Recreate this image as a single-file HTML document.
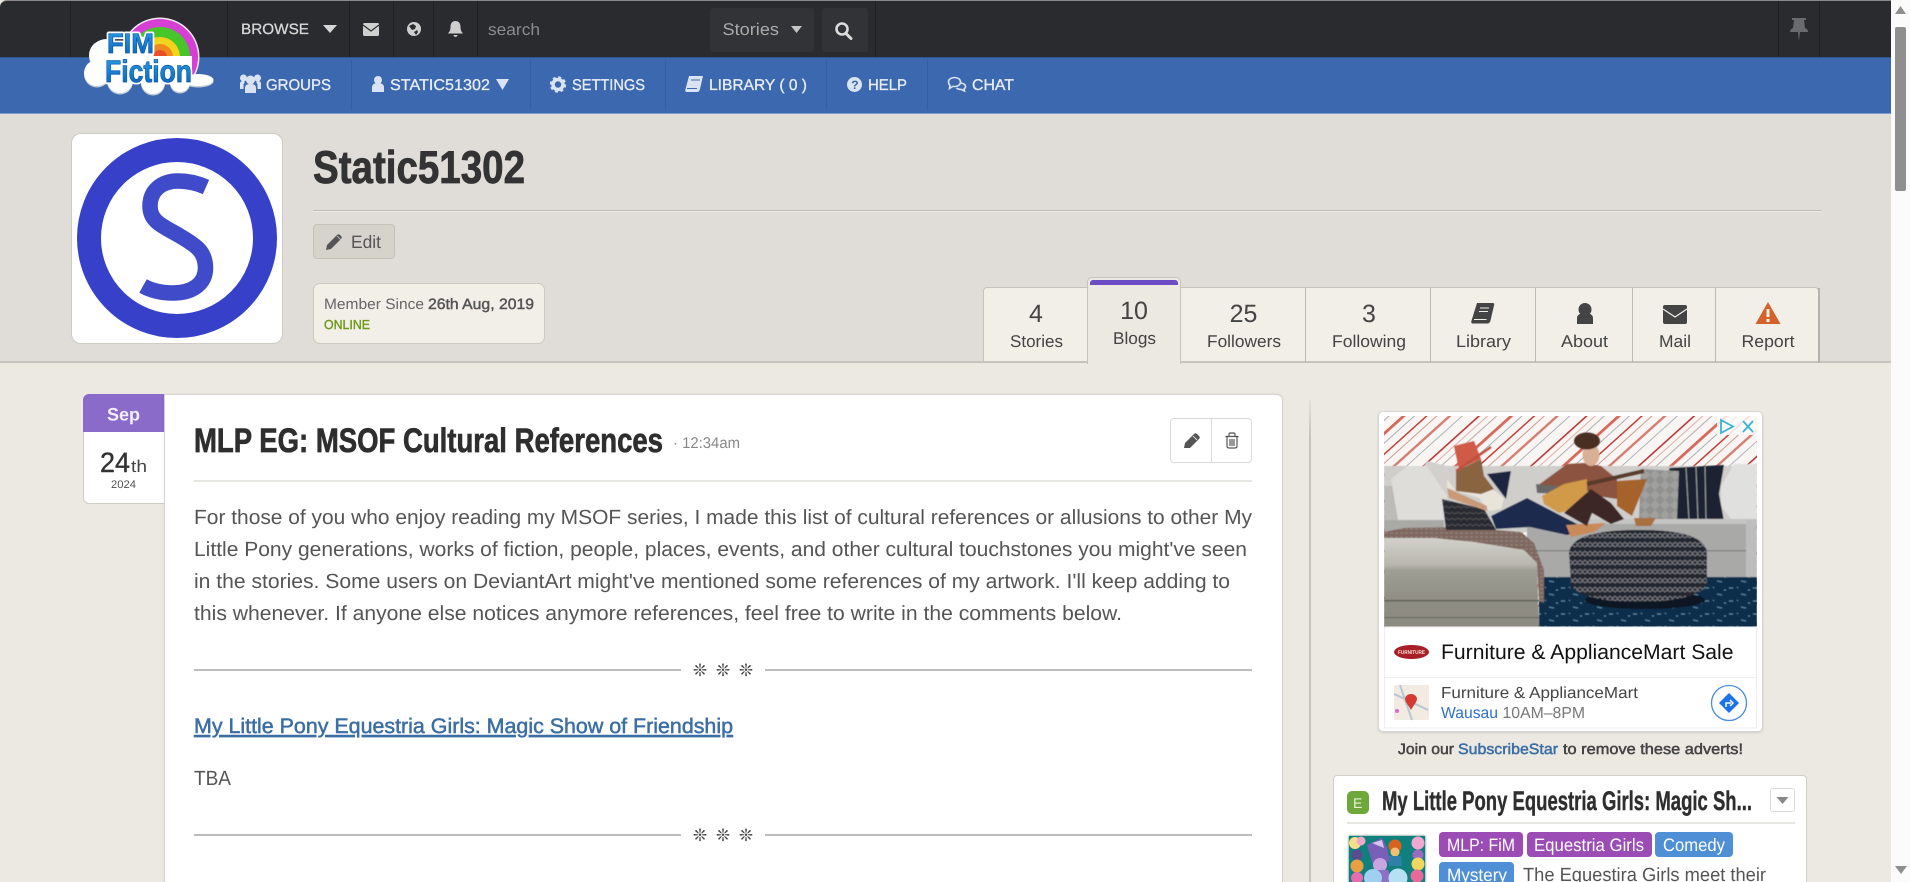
<!DOCTYPE html>
<html lang="en"><head><meta charset="utf-8"><title>Static51302 - Fimfiction</title>
<style>
html,body{margin:0;padding:0;width:1910px;height:882px;overflow:hidden;background:#ece8e2;font-family:"Liberation Sans",sans-serif}
#w{position:absolute;left:0;top:0;width:1910px;height:882px;overflow:hidden}
.b{position:absolute;box-sizing:border-box}
svg{position:absolute;left:0;top:0}
svg text{font-family:"Liberation Sans",sans-serif;text-rendering:geometricPrecision}
.nav{font-size:15.5px;fill:#e8edf6;stroke:#e8edf6;stroke-width:.3}
.tb{fill:#555;font-size:20.5px}
.tab{fill:#444;font-size:17px;text-anchor:middle}
.num{fill:#444;font-size:25px;text-anchor:middle}
.tag{fill:#fff;font-size:18px}
</style></head><body><div id="w">
<!-- top bars -->
<div class="b" style="left:0;top:0;width:1891px;height:58px;background:#2a2b2f;border-top:1px solid #8a8a8a;border-top-left-radius:7px"></div>
<div class="b" style="left:0;top:57px;width:1891px;height:57px;background:#3b68ae;border-top:1px solid #2f5590;border-bottom:1px solid #7f9cc8"></div>
<!-- header -->
<div class="b" style="left:0;top:114px;width:1891px;height:249px;background:#e0ddd8;border-bottom:2px solid #c6c3be"></div>
<div class="b" style="left:0;top:363px;width:1891px;height:519px;background:#ece8e2"></div>
<!-- scrollbar -->
<div class="b" style="left:1891px;top:0;width:19px;height:882px;background:#fbfbfb"></div>
<div class="b" style="left:1895px;top:27px;width:11px;height:164px;background:#8f8f8f;border-radius:2px"></div>
<!-- avatar -->
<div class="b" style="left:71px;top:133px;width:212px;height:211px;background:#fff;border:1px solid #cfccc6;border-radius:10px"></div>
<!-- edit & member -->
<div class="b" style="left:313px;top:224px;width:82px;height:35px;background:#d6d3cd;border:1px solid #c5c2bc;border-radius:4px"></div>
<div class="b" style="left:313px;top:283px;width:232px;height:61px;background:#f2eee8;border:1px solid #cdcac4;border-radius:7px"></div>
<!-- tabs -->
<div class="b" style="left:983px;top:287px;width:836px;height:76px;background:#f2eee8;border:1px solid #c6c3be;border-bottom:2px solid #c6c3be;border-radius:4px 4px 0 0"></div>
<div class="b" style="left:1087px;top:277px;width:94px;height:87px;background:#ece8e2;border:1px solid #c6c3be;border-bottom:0;border-radius:5px 5px 0 0"></div>
<div class="b" style="left:1090px;top:280px;width:88px;height:5px;background:#6b4cc4;border-radius:3px 3px 0 0"></div>
<div class="b" style="left:1305px;top:288px;width:1px;height:74px;background:#bdbab5"></div>
<div class="b" style="left:1430px;top:288px;width:1px;height:74px;background:#bdbab5"></div>
<div class="b" style="left:1535px;top:288px;width:1px;height:74px;background:#bdbab5"></div>
<div class="b" style="left:1632px;top:288px;width:1px;height:74px;background:#bdbab5"></div>
<div class="b" style="left:1715px;top:288px;width:1px;height:74px;background:#bdbab5"></div>
<div class="b" style="left:1818px;top:288px;width:2px;height:75px;background:#b5b2ad"></div>
<!-- date -->
<div class="b" style="left:83px;top:394px;width:82px;height:110px;background:#fff;border:1px solid #cfccc6;border-radius:6px 0 0 6px"></div>
<div class="b" style="left:83px;top:394px;width:81px;height:38px;background:#8a6bc9;border-radius:6px 0 0 0"></div>
<!-- card -->
<div class="b" style="left:164px;top:394px;width:1119px;height:500px;background:#fff;border:1px solid #d6d3cd;border-radius:0 6px 0 0;box-shadow:0 0 3px rgba(0,0,0,.06)"></div>
<div class="b" style="left:1170px;top:418px;width:82px;height:45px;background:#fff;border:1px solid #dcdad6;border-radius:4px"></div>
<div class="b" style="left:1211px;top:418px;width:1px;height:45px;background:#dcdad6"></div>
<div class="b" style="left:194px;top:480px;width:1058px;height:2px;background:#e8e6e3"></div>
<div class="b" style="left:194px;top:669px;width:487px;height:2px;background:#bdbdbd"></div>
<div class="b" style="left:765px;top:669px;width:487px;height:2px;background:#bdbdbd"></div>
<div class="b" style="left:194px;top:834px;width:487px;height:2px;background:#bdbdbd"></div>
<div class="b" style="left:765px;top:834px;width:487px;height:2px;background:#bdbdbd"></div>
<!-- sidebar rule -->
<div class="b" style="left:1309px;top:400px;width:2px;height:482px;background:linear-gradient(#e2dfd9,#c6c3be 40px)"></div>
<!-- ad -->
<div class="b" style="left:1378px;top:411px;width:385px;height:321px;background:#fff;border:1px solid #d8d5d0;border-radius:5px;box-shadow:0 1px 2px rgba(0,0,0,.12)"></div>
<!-- story card -->
<div class="b" style="left:1333px;top:775px;width:474px;height:120px;background:#fff;border:1px solid #d2cfca;border-radius:4px"></div>
<div class="b" style="left:1347px;top:822px;width:448px;height:2px;background:#e8e6e3"></div>
<div class="b" style="left:1770px;top:788px;width:25px;height:24px;background:#fff;border:1px solid #dcdad6;border-radius:3px"></div>
<div class="b" style="left:1347px;top:791px;width:22px;height:23px;background:#6fa83a;border-radius:5px"></div>
<div class="b" style="left:1439px;top:832px;width:84px;height:25px;background:#9b4db5;border-radius:4px"></div>
<div class="b" style="left:1527px;top:832px;width:125px;height:25px;background:#9b4db5;border-radius:4px"></div>
<div class="b" style="left:1655px;top:832px;width:78px;height:25px;background:#4f8fd6;border-radius:4px"></div>
<div class="b" style="left:1439px;top:862px;width:75px;height:25px;background:#4f8fd6;border-radius:4px"></div>

<svg width="1910" height="882" viewBox="0 0 1910 882" xmlns="http://www.w3.org/2000/svg">
<defs>
<pattern id="st" width="72" height="72" patternUnits="userSpaceOnUse" patternTransform="rotate(48)">
<rect width="72" height="72" fill="#f8f5f3"/>
<rect x="2" width="1.600" height="72" fill="#b5393a"/><rect x="8" width="1" height="72" fill="#dfb0aa"/>
<rect x="14" width="1.100" height="72" fill="#b9b0b0"/><rect x="23" width="2.800" height="72" fill="#d4685c"/>
<rect x="31" width="1" height="72" fill="#aab0b8"/><rect x="39" width="1.500" height="72" fill="#c2403c"/>
<rect x="46" width="1" height="72" fill="#cf9a92"/><rect x="54" width="2.400" height="72" fill="#d27e72"/>
<rect x="63" width="1" height="72" fill="#b0b4bc"/>
</pattern>
<pattern id="ot" width="10" height="9" patternUnits="userSpaceOnUse">
<rect width="10" height="9" fill="#23252f"/><path d="M0 2l2.500 2.500L5 2l2.500 2.500L10 2M0 7l2.500-2L5 7l2.500-2L10 7" fill="none" stroke="#7d7e84" stroke-width=".9"/>
</pattern>
<pattern id="rug" width="24" height="13" patternUnits="userSpaceOnUse">
<rect width="24" height="13" fill="#0d2f4b"/><path d="M1 3h4M13 9l5 1M9 2l1 1M20 5h2" stroke="#5f8ea6" stroke-width="1"/>
</pattern>
<pattern id="pl" width="6" height="6" patternUnits="userSpaceOnUse"><rect width="6" height="6" fill="#2b2c32"/><path d="M0 2l3 2 3-2" stroke="#5d5e62" fill="none" stroke-width=".7"/></pattern>
<pattern id="gp" width="10" height="10" patternUnits="userSpaceOnUse"><rect width="10" height="10" fill="#919190"/><path d="M0 5l5-5 5 5-5 5z" fill="#a0a09e"/></pattern>
<pattern id="bk" width="5" height="4" patternUnits="userSpaceOnUse"><rect width="5" height="4" fill="#7e6860"/><path d="M0 1h3" stroke="#a39489" stroke-width=".7"/></pattern>
<linearGradient id="lg" x1="0" y1="0" x2="0" y2="1"><stop offset="0" stop-color="#2ea6f0"/><stop offset="1" stop-color="#0a5cb0"/></linearGradient>
<linearGradient id="ch" x1="0" y1="0" x2="0" y2="1"><stop offset="0" stop-color="#d2d1ca"/><stop offset=".3" stop-color="#b8b7af"/><stop offset=".36" stop-color="#a09f95"/><stop offset=".7" stop-color="#8f8e84"/><stop offset="1" stop-color="#8c8b81"/></linearGradient>
<clipPath id="adc"><rect x="1384" y="416" width="373" height="211"/></clipPath>
<clipPath id="cv"><rect x="1348" y="835" width="78" height="47"/></clipPath>
<clipPath id="rb"><path d="M110 0h100v78h-100z"/></clipPath>
<filter id="sf"><feGaussianBlur stdDeviation=".45"/></filter>
</defs>

<!-- topbar separators -->
<g fill="#1f2023"><rect x="70" y="1" width="1" height="56"/><rect x="227" y="1" width="1" height="56"/><rect x="349" y="1" width="1" height="56"/><rect x="393" y="1" width="1" height="56"/><rect x="433" y="1" width="1" height="56"/><rect x="477" y="1" width="1" height="56"/><rect x="875" y="1" width="1" height="56"/><rect x="1778" y="1" width="1" height="56"/><rect x="1819" y="1" width="1" height="56"/></g>
<g fill="#35609f"><rect x="351" y="60" width="1" height="50"/><rect x="530" y="60" width="1" height="50"/><rect x="665" y="60" width="1" height="50"/><rect x="826" y="60" width="1" height="50"/><rect x="927" y="60" width="1" height="50"/></g>
<rect x="710" y="8" width="104" height="44" rx="3" fill="#323336"/>
<rect x="822" y="8" width="46" height="44" rx="3" fill="#323336"/>

<!-- topbar content -->
<text x="241" y="34" font-size="15" fill="#d6d6d6" stroke="#d6d6d6" stroke-width=".3" textLength="68" lengthAdjust="spacingAndGlyphs">BROWSE</text>
<path d="M323 25h14l-7 8z" fill="#d6d6d6"/>
<rect x="363" y="23" width="16" height="13" rx="1.500" fill="#cfcfcf"/><path d="M363 25l8 6 8-6" fill="none" stroke="#2a2b2f" stroke-width="1.100"/>
<circle cx="414" cy="29" r="7" fill="#cfcfcf"/><path d="M409 26l4-2 3 2-1 3-3 1zM414 32l3-2 1 2-2 3z" fill="#2a2b2f"/>
<path d="M455.500 21c-3.500 0-5 2.500-5 6 0 4-1.500 5-2.500 6.500h15c-1-1.500-2.500-2.500-2.500-6.500 0-3.500-1.500-6-5-6zM453.500 35h4c0 2.500-4 2.500-4 0z" fill="#cfcfcf"/>
<text x="488" y="35" font-size="16.500" fill="#8c8c8c" textLength="52" lengthAdjust="spacingAndGlyphs">search</text>
<text x="722.500" y="35" font-size="17" fill="#a9a9a9" textLength="56.500" lengthAdjust="spacingAndGlyphs">Stories</text>
<path d="M791 26h11l-5.500 7z" fill="#c4c4c4"/>
<circle cx="842" cy="29" r="5.500" fill="none" stroke="#dcdcdc" stroke-width="2.600"/><path d="M846 33.500l5 5" stroke="#dcdcdc" stroke-width="3" stroke-linecap="round"/>
<path transform="translate(0,3)" d="M1792 15h14v2h-2l1 8c2 1 3 2 3 4h-8l-1 9-1-9h-8c0-2 1-3 3-4l1-8h-2z" fill="#6a6b6e"/>

<!-- blue nav -->
<g fill="#d9e3f2">
<circle cx="250.500" cy="80" r="4.500"/><circle cx="243.500" cy="78" r="3.500"/><circle cx="257.500" cy="78" r="3.500"/>
<path d="M245 93v-5c0-3 2-4 5.500-4s5.500 1 5.500 4v5zM240 89v-5c0-2 1-3 3-3l2 1c-1 1-1.500 2-1.500 3.500v3.500zM261 89v-5c0-2-1-3-3-3l-2 1c1 1 1.500 2 1.500 3.500v3.500z"/>
<circle cx="378" cy="80" r="4"/><path d="M372 92v-4.500c0-3 2-4.500 6-4.500s6 1.500 6 4.500v4.500z"/>
<path d="M496 79h13l-6.500 11z"/>
<circle cx="558" cy="84.500" r="5" fill="none" stroke="#d9e3f2" stroke-width="3.500"/><circle cx="558" cy="84.500" r="7.200" fill="none" stroke="#d9e3f2" stroke-width="2" stroke-dasharray="3 2.650"/>
<path d="M689 76h14l-3 13c-.4 1.500-1.200 3-3 3h-10c-1.500 0-2-1-1.600-2.500z"/><path d="M687 88.500h10M691 80h9" stroke="#3b68ae" stroke-width=".9"/>
<circle cx="854.500" cy="84.500" r="7.500"/>
</g>
<text x="851.300" y="89" font-size="12" font-weight="700" fill="#3b68ae">?</text>
<path d="M948.500 82c0-3 3-4.500 6-4.500s6 1.500 6 4.500-3 4.500-6 4.500h-2l-3 2 .5-3c-1-1-1.500-2-1.500-3.500z" fill="none" stroke="#d9e3f2" stroke-width="1.600"/>
<path d="M960 83c3 0 5.500 1.500 5.500 3.500 0 1.500-.5 2-1.500 2.500l.5 2-3-1.500c-2 0-4-.5-5-1.500" fill="none" stroke="#d9e3f2" stroke-width="1.600"/>
<text class="nav" x="266" y="90" textLength="65" lengthAdjust="spacingAndGlyphs">GROUPS</text>
<text class="nav" x="390" y="90" textLength="100" lengthAdjust="spacingAndGlyphs">STATIC51302</text>
<text class="nav" x="572" y="90" textLength="73" lengthAdjust="spacingAndGlyphs">SETTINGS</text>
<text class="nav" x="709" y="90" textLength="98" lengthAdjust="spacingAndGlyphs">LIBRARY ( 0 )</text>
<text class="nav" x="868" y="90" textLength="39" lengthAdjust="spacingAndGlyphs">HELP</text>
<text class="nav" x="972" y="90" textLength="42" lengthAdjust="spacingAndGlyphs">CHAT</text>

<!-- logo -->
<g>
<g clip-path="url(#rb)">
<circle cx="160" cy="57" r="39.500" fill="#f4e9f6"/>
<circle cx="160" cy="57" r="38" fill="#d63fd4"/>
<circle cx="160" cy="57" r="30" fill="#46c62a"/>
<circle cx="160" cy="57" r="20" fill="#f2d41c"/>
<circle cx="160" cy="57" r="13" fill="#f08a20"/>
<circle cx="160" cy="57" r="7" fill="#e6502a"/>
</g>
<g fill="#c3ccd6" transform="translate(0,1.500)"><ellipse cx="107" cy="55" rx="18" ry="16"/><circle cx="97" cy="73" r="13"/><circle cx="120" cy="80" r="13"/><circle cx="153" cy="82" r="12"/><circle cx="180" cy="82" r="10"/><ellipse cx="198" cy="80" rx="15.500" ry="6"/></g>
<g fill="#fff"><ellipse cx="107" cy="55" rx="18" ry="16"/><circle cx="97" cy="73" r="13"/><circle cx="120" cy="80" r="13"/><circle cx="153" cy="82" r="12"/><circle cx="180" cy="82" r="10"/><ellipse cx="198" cy="80" rx="15.500" ry="6"/><rect x="100" y="56" width="92" height="27"/><circle cx="138" cy="52" r="16"/></g>
<g font-weight="700" stroke="#fff" stroke-width="4.500" stroke-linejoin="round" fill="#fff">
<text x="107" y="53" font-size="28" textLength="47" lengthAdjust="spacingAndGlyphs">FIM</text>
<text x="105" y="82" font-size="31" textLength="87" lengthAdjust="spacingAndGlyphs">Fiction</text>
</g>
<text x="107" y="53" font-size="28" font-weight="700" fill="url(#lg)" stroke="#0a5cb0" stroke-width=".8" textLength="47" lengthAdjust="spacingAndGlyphs">FIM</text>
<text x="105" y="82" font-size="31" font-weight="700" fill="url(#lg)" stroke="#0a5cb0" stroke-width=".8" textLength="87" lengthAdjust="spacingAndGlyphs">Fiction</text>
</g>

<!-- avatar -->
<circle cx="177" cy="238" r="88" fill="none" stroke="#3740c8" stroke-width="24"/>
<path d="M206 187C197 183 188 181 178 181C161 181 150 191 150 206C150 222 163 226 180 236C197 246 205.500 252 205.500 268C205.500 284 192 293 173 293C162 293 152 291 143 286" fill="none" stroke="#3f4bc9" stroke-width="15.500"/>

<!-- header text -->
<text x="313" y="183" font-size="46" font-weight="700" fill="#333" stroke="#333" stroke-width=".8" textLength="212" lengthAdjust="spacingAndGlyphs">Static51302</text>
<rect x="313" y="210" width="1508" height="1" fill="#bdbbb6"/><rect x="313" y="211" width="1508" height="1" fill="#eeebe6"/>
<path d="M326 250l1-5 10-10c1-1 2-1 3 0l1 1c1 1 1 2 0 3l-10 10z" fill="#555"/><path d="M337 236l4 4" stroke="#d6d3cd" stroke-width=".8"/>
<text x="351" y="248" font-size="18" fill="#555" textLength="30" lengthAdjust="spacingAndGlyphs">Edit</text>
<text x="324" y="309" font-size="15" fill="#666" textLength="100" lengthAdjust="spacingAndGlyphs">Member Since</text>
<text x="428" y="309" font-size="15" fill="#555" stroke="#555" stroke-width=".45" textLength="106" lengthAdjust="spacingAndGlyphs">26th Aug, 2019</text>
<text x="324" y="329" font-size="13" fill="#6e9a1a" stroke="#6e9a1a" stroke-width=".4" textLength="46" lengthAdjust="spacingAndGlyphs">ONLINE</text>

<!-- tabs text -->
<text class="num" x="1036" y="322">4</text><text class="tab" x="1036.500" y="347" textLength="53" lengthAdjust="spacingAndGlyphs">Stories</text>
<text class="num" x="1134" y="319">10</text><text class="tab" x="1134.500" y="344" textLength="43" lengthAdjust="spacingAndGlyphs">Blogs</text>
<text class="num" x="1243.500" y="322">25</text><text class="tab" x="1244" y="347" textLength="74" lengthAdjust="spacingAndGlyphs">Followers</text>
<text class="num" x="1369" y="322">3</text><text class="tab" x="1369" y="347" textLength="74" lengthAdjust="spacingAndGlyphs">Following</text>
<text class="tab" x="1483.500" y="347" textLength="55" lengthAdjust="spacingAndGlyphs">Library</text>
<text class="tab" x="1584.500" y="347" textLength="47" lengthAdjust="spacingAndGlyphs">About</text>
<text class="tab" x="1675" y="347" textLength="32" lengthAdjust="spacingAndGlyphs">Mail</text>
<text class="tab" x="1768" y="347" textLength="53" lengthAdjust="spacingAndGlyphs">Report</text>
<path d="M1477 303h15.500c1.500 0 2 1 1.500 2.500l-3.500 15c-.5 2-1.500 3-3.500 3H1473c-1.500 0-2-1-1.600-2.500z" fill="#444"/><path d="M1474 319.500h12.500M1480 308h9M1479 311.500h9" stroke="#f2eee8" stroke-width="1"/>
<circle cx="1585" cy="309.500" r="6.500" fill="#444"/><path d="M1577 324v-6c0-3 3-5 8-5s8 2 8 5v6z" fill="#444"/>
<rect x="1663" y="305" width="24" height="19" rx="2" fill="#444"/><path d="M1663 309l12 8 12-8" fill="none" stroke="#f2eee8" stroke-width="1.300"/>
<path d="M1768 302l12.500 22h-25z" fill="#d2622a"/><rect x="1766.500" y="309" width="3" height="8" fill="#f2eee8"/><rect x="1766.500" y="319" width="3" height="3" fill="#f2eee8"/>

<!-- date text -->
<text x="123.500" y="420.500" font-size="18" font-weight="700" fill="#f3efff" text-anchor="middle" textLength="33" lengthAdjust="spacingAndGlyphs">Sep</text>
<text x="100" y="472" font-size="28" fill="#333" stroke="#333" stroke-width=".4" textLength="30" lengthAdjust="spacingAndGlyphs">24</text>
<text x="131" y="472" font-size="17" fill="#444" textLength="16" lengthAdjust="spacingAndGlyphs">th</text>
<text x="111" y="488" font-size="11" fill="#555" textLength="25" lengthAdjust="spacingAndGlyphs">2024</text>

<!-- post title -->
<text x="194" y="452" font-size="34" font-weight="700" fill="#2e2e2e" stroke="#2e2e2e" stroke-width=".7" textLength="469" lengthAdjust="spacingAndGlyphs">MLP EG: MSOF Cultural References</text>
<text x="673" y="448" font-size="15.500" fill="#888" textLength="67" lengthAdjust="spacingAndGlyphs">· 12:34am</text>
<path d="M1184 448l1-5 9-9c1-1 2-1 3 0l2 2c1 1 1 2 0 3l-9 9z" fill="#555"/><path d="M1193 436l4 4" stroke="#fff" stroke-width=".8"/>
<path d="M1225.500 436.500h13M1229 436.500v-2c0-1 .5-1.500 1.500-1.500h3c1 0 1.500 .5 1.500 1.500v2M1227 437v9c0 1 .5 2 2 2h6c1.500 0 2-1 2-2v-9M1230 439v7M1232 439v7M1234 439v7" fill="none" stroke="#555" stroke-width="1.200"/>

<!-- body -->
<text class="tb" x="194" y="524" textLength="1058" lengthAdjust="spacingAndGlyphs">For those of you who enjoy reading my MSOF series, I made this list of cultural references or allusions to other My</text>
<text class="tb" x="194" y="556" textLength="1053" lengthAdjust="spacingAndGlyphs">Little Pony generations, works of fiction, people, places, events, and other cultural touchstones you might've seen</text>
<text class="tb" x="194" y="588" textLength="1036" lengthAdjust="spacingAndGlyphs">in the stories. Some users on DeviantArt might've mentioned some references of my artwork. I'll keep adding to</text>
<text class="tb" x="194" y="620" textLength="928" lengthAdjust="spacingAndGlyphs">this whenever. If anyone else notices anymore references, feel free to write in the comments below.</text>
<g font-size="17" fill="#444" text-anchor="middle">
<text x="700" y="676" style="font-family:'DejaVu Sans',sans-serif">❊</text><text x="723" y="676" style="font-family:'DejaVu Sans',sans-serif">❊</text><text x="746" y="676" style="font-family:'DejaVu Sans',sans-serif">❊</text>
<text x="700" y="841" style="font-family:'DejaVu Sans',sans-serif">❊</text><text x="723" y="841" style="font-family:'DejaVu Sans',sans-serif">❊</text><text x="746" y="841" style="font-family:'DejaVu Sans',sans-serif">❊</text>
</g>
<text x="194" y="733" font-size="21" fill="#3a6ea5" stroke="#3a6ea5" stroke-width=".5" textLength="539" lengthAdjust="spacingAndGlyphs" text-decoration="underline">My Little Pony Equestria Girls: Magic Show of Friendship</text>
<text class="tb" x="194" y="785" textLength="37" lengthAdjust="spacingAndGlyphs">TBA</text>

<!-- ad image -->
<g clip-path="url(#adc)">
<rect x="1384" y="416" width="373" height="211" fill="url(#st)"/>
<g filter="url(#sf)">
<!-- sofa back -->
<rect x="1384" y="466" width="373" height="66" fill="#cfcecb"/>
<rect x="1384" y="486" width="16" height="46" fill="#bcbbb7"/>
<path d="M1427 461l20 5 5 13-5 17-30-20z" fill="#d2d0cd"/>
<path d="M1391 479l16-13h20l20 30-3 30h-45z" fill="#dfddd9"/>
<path d="M1721 486l13-22h23v62h-20l-16-20z" fill="#e0e0df"/>
<path d="M1669 468l55-3-5 29 5 27h-47z" fill="#1d2230"/><g stroke="#a9abb0" stroke-width=".9"><path d="M1686 468l3 52M1696 467l2 53M1705 467l1 54"/></g>
<path d="M1641 469l38 2-2 50-38-2z" fill="url(#gp)"/>
<path d="M1617 481l30-2-15 37-15-10z" fill="#a5622a"/>
<!-- seat -->
<path d="M1527 520h230v57h-230z" fill="#a9a9a8"/><rect x="1527" y="519" width="230" height="5" fill="#c4c4c3"/><rect x="1527" y="550" width="230" height="1.500" fill="#868686"/><rect x="1746" y="520" width="11" height="57" fill="#bdbdbd"/>
<rect x="1384" y="520" width="60" height="14" fill="#a9a9a5"/>
<!-- rug -->
<rect x="1539" y="577" width="218" height="50" fill="url(#rug)"/>
<!-- chaise -->
<path d="M1384 538l50 0 40 4 50 8 13 13 2 64h-155z" fill="url(#ch)"/>
<rect x="1384" y="600" width="155" height="1.500" fill="#5f5e55"/><rect x="1384" y="617" width="155" height="1.200" fill="#6c6b62"/>
<path d="M1384 532l20-4 53-1 64 5 13 11 10 27v33l-5-3-2-37-13-13-50-8-40-4h-50z" fill="url(#bk)"/>
<!-- ottoman -->
<ellipse cx="1645" cy="600" rx="60" ry="9" fill="#071320"/>
<path d="M1569 552C1572 535 1600 530 1640 530C1680 530 1704 536 1707 552L1707 585C1700 597 1670 602 1638 602C1605 602 1578 597 1571 585Z" fill="url(#ot)"/>
<!-- woman -->
<path d="M1442 499l42 10 10 17 2 4h-50z" fill="url(#pl)"/>
<path d="M1487 474l24-3-5 28z" fill="#1f2740"/>
<path d="M1447 479l9 12 28-8 20 15-3 11-12 2-10-13-32-10z" fill="#e8e4da"/>
<path d="M1447 488l40 18v5l-38-13z" fill="#c99a78"/>
<path d="M1456 471l25-12 3 17 10 13-13 5-25-3z" fill="#8a6440"/>
<path d="M1454 446l20-5 7 18-22 10z" fill="#cf5a45"/>
<path d="M1456 471l35-24" stroke="#c0503c" stroke-width="2.500"/>
<!-- jeans & feet -->
<path d="M1491 516l36-18 50 26 1 8-11 3-37-8-34 2z" fill="#1a2c4e"/>
<path d="M1566 525l40-2-12 9-23 5z" fill="#c98a58"/>
<!-- man -->
<path d="M1537 486l30-22 17-1 17 3 16 13v20l-20-3-26-13-24 10z" fill="#8c5240"/>
<path d="M1536 484l21 2 9 8-29-1z" fill="#6a6866"/>
<path d="M1542 496l22-12 23-5v14l-13 16-15 4-15-9z" fill="#d09a48"/>
<path d="M1587 484l57-13" stroke="#5a3a2a" stroke-width="4"/>
<path d="M1564 513l27-24 20 14 13 16-13 5-19-11-5 13z" fill="#3c2628"/>
<path d="M1634 518h22l-5 8h-15z" fill="#a9703f"/>
<ellipse cx="1591" cy="455" rx="8.500" ry="11" fill="#d9b096"/>
<ellipse cx="1587" cy="441" rx="13" ry="8.500" fill="#4a2e20"/>
</g>
<rect x="1717" y="416" width="40" height="19" fill="#fbfaf9" opacity=".85"/>
<path d="M1721 420v13l12-6.500z" fill="none" stroke="#37b5d6" stroke-width="1.800"/>
<path d="M1743 421l10 11M1753 421l-10 11" stroke="#37b5d6" stroke-width="1.800"/>
</g>
<rect x="1384.500" y="627" width="372" height="101" fill="none" stroke="#eeeeee"/>
<rect x="1384" y="677" width="373" height="1" fill="#efefef"/>
<ellipse cx="1411.500" cy="652" rx="17.500" ry="7" fill="#a81f25"/><text x="1398" y="654" font-size="5.500" font-weight="700" fill="#f4dcdc" textLength="27" lengthAdjust="spacingAndGlyphs">FURNITURE</text>
<text x="1441" y="659" font-size="21" fill="#111" textLength="292.500" lengthAdjust="spacingAndGlyphs">Furniture &amp; ApplianceMart Sale</text>
<rect x="1394" y="685" width="35" height="35" rx="2" fill="#f1ebe2"/><path d="M1394 694l34 16M1400 685l12 35" stroke="#b9c7d4" stroke-width="2"/><path d="M1411 694c-4 0-6 3-6 5 0 3 4 7 6 11 2-4 6-8 6-11 0-2-2-5-6-5z" fill="#d63a30"/><circle cx="1397" cy="711" r="2" fill="#d86ad0"/>
<text x="1441" y="698" font-size="16" fill="#444" textLength="197" lengthAdjust="spacingAndGlyphs">Furniture &amp; ApplianceMart</text>
<text x="1441" y="718" font-size="16" fill="#2f6fd0" textLength="57" lengthAdjust="spacingAndGlyphs">Wausau</text>
<text x="1502.500" y="718" font-size="16" fill="#777" textLength="82.500" lengthAdjust="spacingAndGlyphs">10AM–8PM</text>
<circle cx="1729" cy="703" r="17.500" fill="#fff" stroke="#4a8be0" stroke-width="1.300"/>
<path d="M1729 694l9 9-9 9-9-9z" fill="#1a73e8" stroke="#1a73e8" stroke-width="1.500" stroke-linejoin="round"/><path d="M1726 707v-4h5M1730 700l3 3-3 3" fill="none" stroke="#fff" stroke-width="1.500"/>

<text x="1398" y="754" font-size="15" fill="#444" stroke="#444" stroke-width=".5" textLength="56" lengthAdjust="spacingAndGlyphs">Join our</text>
<text x="1458" y="754" font-size="15" fill="#3a6ea5" stroke="#3a6ea5" stroke-width=".5" textLength="100" lengthAdjust="spacingAndGlyphs">SubscribeStar</text>
<text x="1563" y="754" font-size="15" fill="#444" stroke="#444" stroke-width=".5" textLength="180" lengthAdjust="spacingAndGlyphs">to remove these adverts!</text>

<!-- story card -->
<text x="1353" y="808" font-size="14" fill="#e6f0d8">E</text>
<text x="1382" y="810" font-size="27" font-weight="700" fill="#2e2e2e" stroke="#2e2e2e" stroke-width=".4" textLength="370" lengthAdjust="spacingAndGlyphs">My Little Pony Equestria Girls: Magic Sh...</text>
<path d="M1776.500 797h12l-6 7z" fill="#888"/>
<g clip-path="url(#cv)">
<rect x="1348" y="835" width="78" height="47" fill="#10807f"/>
<path d="M1367 845l15-7 5 10 3 13-17 4z" fill="#7a5fb8"/><path d="M1372 843l10-3 2 8z" fill="#d8c4ee"/>
<circle cx="1380" cy="865" r="7" fill="#c9a5e0"/><path d="M1372 870l16 0 5 12h-24z" fill="#8e6fc6"/>
<circle cx="1395" cy="846" r="6.500" fill="#d8631f"/><circle cx="1395" cy="852" r="4.500" fill="#f0c070"/><path d="M1389 856h12l1 10h-13z" fill="#2f7fa8"/>
<circle cx="1373" cy="878" r="9" fill="#9fd0f0"/><circle cx="1398" cy="878" r="9.500" fill="#b8e0f5"/>
<circle cx="1355" cy="843" r="6" fill="#f5e08a"/><circle cx="1361" cy="841" r="4.500" fill="#f0a8c8"/>
<circle cx="1357" cy="855" r="5.500" fill="#5a4a90"/><circle cx="1357" cy="866" r="6.500" fill="#e8a040"/><circle cx="1357" cy="878" r="6" fill="#e86ab0"/>
<circle cx="1418" cy="843" r="6.500" fill="#f0a8d0"/><circle cx="1418" cy="855" r="5.500" fill="#9a6ac0"/><circle cx="1418" cy="864" r="6.500" fill="#f0d860"/><circle cx="1417" cy="876" r="6.500" fill="#e86a9a"/>
</g>
<rect x="1348" y="835" width="78" height="48" rx="2" fill="none" stroke="#e8e6e3" stroke-width="1.500"/>
<text class="tag" x="1447" y="851" textLength="68" lengthAdjust="spacingAndGlyphs">MLP: FiM</text>
<text class="tag" x="1534" y="851" textLength="110" lengthAdjust="spacingAndGlyphs">Equestria Girls</text>
<text class="tag" x="1663" y="851" textLength="62" lengthAdjust="spacingAndGlyphs">Comedy</text>
<text class="tag" x="1447" y="881" textLength="60" lengthAdjust="spacingAndGlyphs">Mystery</text>
<text x="1523" y="881" font-size="19" fill="#555" textLength="243" lengthAdjust="spacingAndGlyphs">The Equestira Girls meet their</text>

<!-- scrollbar arrows -->
<path d="M1895 14l5.500-8 5.500 8z" fill="#8f8f8f"/>
<path d="M1895 866h12l-6 8z" fill="#8f8f8f"/>
</svg>
</div></body></html>
